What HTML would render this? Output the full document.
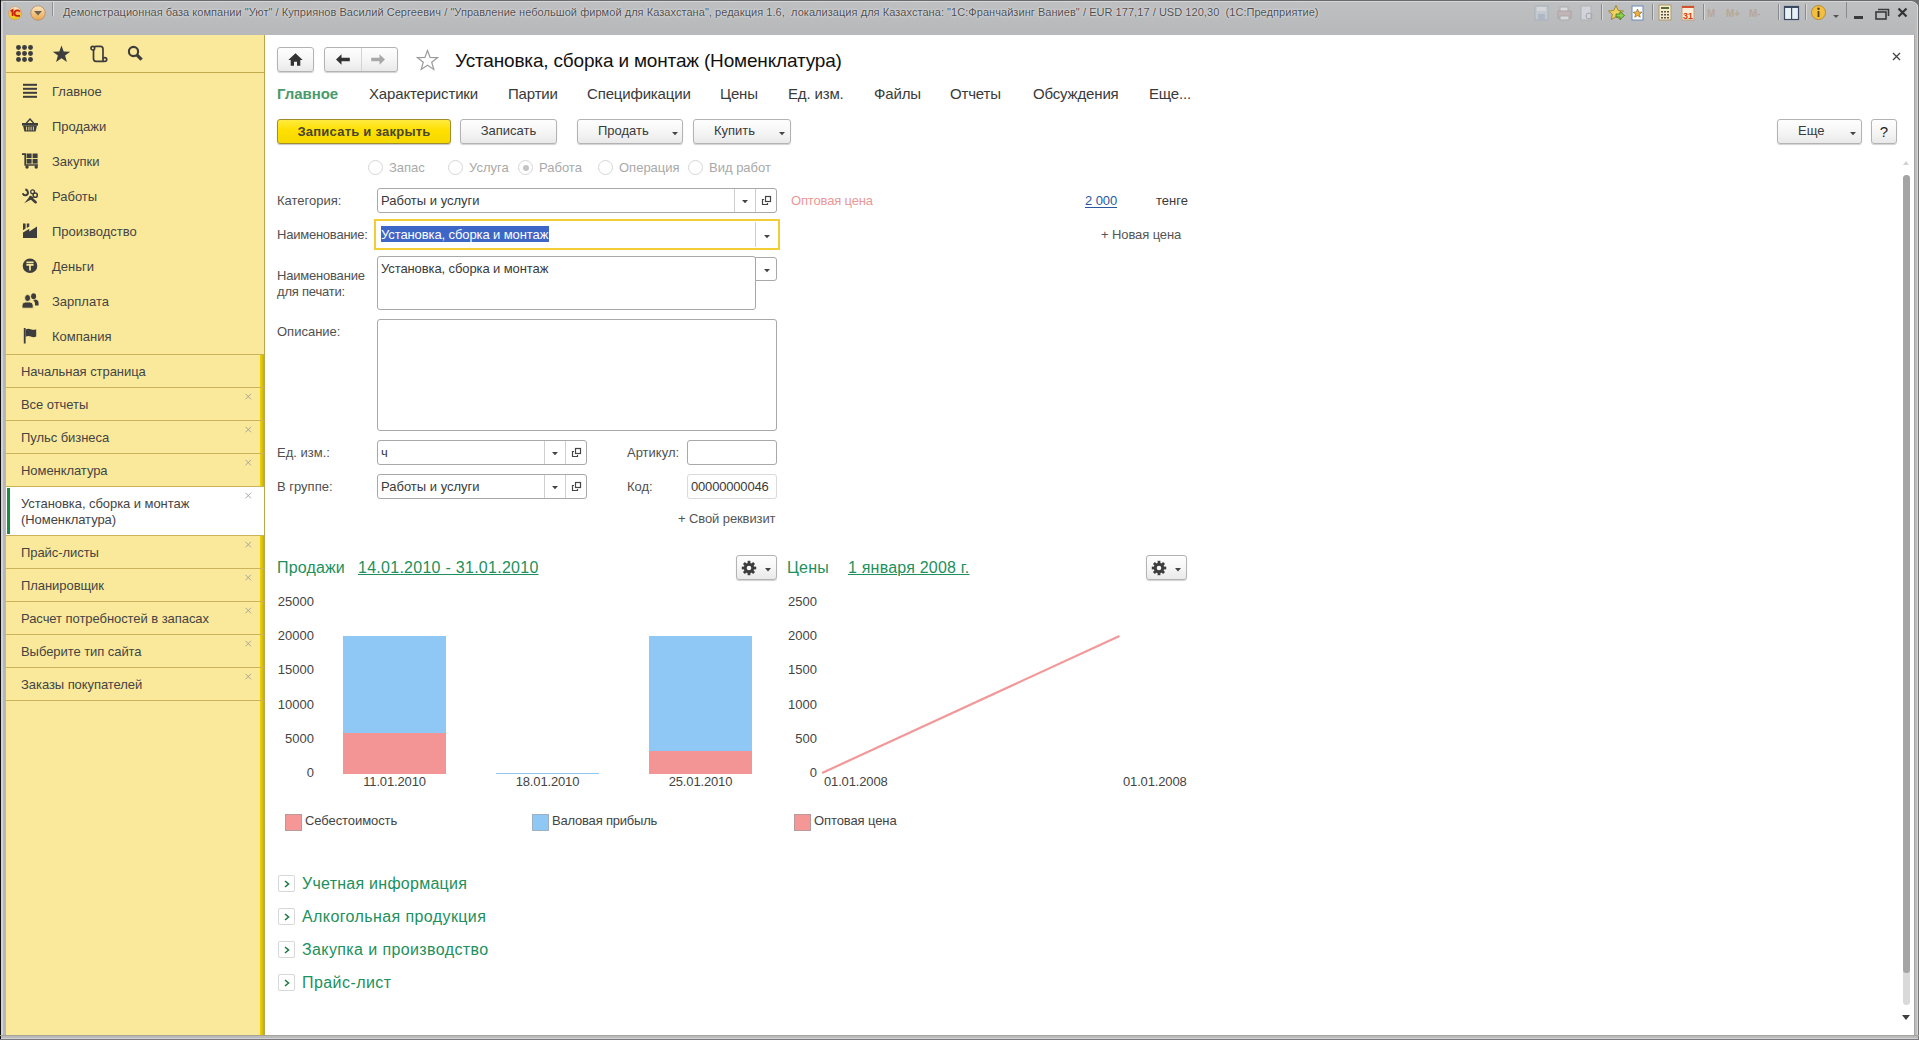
<!DOCTYPE html>
<html><head><meta charset="utf-8">
<style>
*{box-sizing:border-box;margin:0;padding:0}
html,body{width:1919px;height:1040px;overflow:hidden;background:#fff;font-family:"Liberation Sans",sans-serif;color:#333;font-size:13px}
.a{position:absolute;white-space:nowrap}
.sec{left:52px;color:#444}
.win{left:21px;color:#444;letter-spacing:-0.06px}
.sep{left:6px;width:258px;height:1px;background:#cbb35c}
.btn{border:1px solid #b3b3b3;border-radius:3px;background:linear-gradient(#fefefe,#f6f6f6 50%,#e9e9e9);box-shadow:0 1px 1px rgba(0,0,0,.18)}
.fld{border:1px solid #a8a8a8;border-radius:3px;background:#fff}
.lbl{color:#505050}
.txt{color:#3a3a3a}
.green{color:#21905c}
.tab{top:85px;font-size:15px;letter-spacing:-0.16px;color:#3a3a3a}
.yl{width:44px;text-align:right;line-height:16px;color:#444}
.cx{left:243px;width:9px;height:9px}
.dd{width:6px;height:4px}
</style></head><body>
<!-- window frame -->
<div class="a" style="left:0;top:0;width:1919px;height:35px;background:linear-gradient(#bfc0c2,#bbbcbe 50%,#b7b8ba)"></div>
<div class="a" style="left:0;top:0;width:1919px;height:1px;background:#6a6b6d"></div>
<div class="a" style="left:3px;top:1px;width:1906px;height:1px;background:#d5d6d8"></div>
<div class="a" style="left:0;top:0;width:1px;height:1040px;background:#111"></div>
<div class="a" style="left:1px;top:2px;width:2px;height:1038px;background:#d2d3d6"></div>
<div class="a" style="left:3px;top:2px;width:3px;height:1038px;background:#b7b6bd"></div>
<div class="a" style="left:1914px;top:35px;width:1px;height:1005px;background:#a6a6a6"></div>
<div class="a" style="left:1915px;top:2px;width:2px;height:1038px;background:#bdbdbd"></div>
<div class="a" style="left:1917px;top:2px;width:1px;height:1038px;background:#d6d6d6"></div>
<div class="a" style="left:1918px;top:0;width:1px;height:1040px;background:#777"></div>
<div class="a" style="left:0;top:1035px;width:1919px;height:1px;background:#a6a39a"></div>
<div class="a" style="left:1px;top:1036px;width:1917px;height:2px;background:#bababa"></div>
<div class="a" style="left:1px;top:1038px;width:1917px;height:1px;background:#d2d2d6"></div>
<div class="a" style="left:0;top:1039px;width:1919px;height:1px;background:#7a7a7e"></div>

<svg class="a" style="left:1909px;top:0px" width="10" height="10" viewBox="0 0 10 10"><path d="M0 0 H10 V10 Q10 2 2 1.5 H0Z" fill="#6f7072"/><path d="M0 1.5 H2 Q8.6 2 8.6 8.5 V10" fill="none" stroke="#d8d9db" stroke-width="1"/></svg>
<!-- title bar left icons -->
<svg class="a" style="left:7px;top:5px" width="17" height="17" viewBox="0 0 17 17">
<defs><linearGradient id="g1" x1="0" y1="0" x2="0" y2="1"><stop offset="0" stop-color="#fff3d8"/><stop offset=".45" stop-color="#f7b060"/><stop offset=".65" stop-color="#f2d030"/><stop offset="1" stop-color="#e8c020"/></linearGradient>
<linearGradient id="g2" x1="0" y1="0" x2="0" y2="1"><stop offset="0" stop-color="#fbe6c4"/><stop offset=".6" stop-color="#f2c07a"/><stop offset="1" stop-color="#e9a650"/></linearGradient></defs>
<circle cx="8" cy="8.3" r="6.6" fill="url(#g1)" stroke="#c9a37a" stroke-width=".8"/>
<path d="M3.6 6.2 L5.6 5 V11 M7.5 8.5 Q7.5 5.4 10.5 5.4 Q12.2 5.4 12.8 6.6 M7.5 8.5 Q7.5 10.8 10.2 10.8 H13" fill="none" stroke="#c8200a" stroke-width="1.7"/>
</svg>
<svg class="a" style="left:30px;top:5px" width="17" height="17" viewBox="0 0 17 17">
<circle cx="8" cy="8" r="7.2" fill="url(#g2)" stroke="#b58a5a" stroke-width=".8"/>
<path d="M4 6 H12 L8 10.5 Z" fill="#6e6253"/>
</svg>
<div class="a" style="left:52px;top:2px;width:1px;height:14px;background:#8f9093"></div>
<div class="a" style="left:53px;top:2px;width:1px;height:14px;background:#dcdcdc"></div>
<div class="a" style="left:63px;top:6px;font-size:11px;letter-spacing:0.05px;color:#4e4e4e;text-shadow:0 0 3px #e8e8e8,0 0 1px #f0f0f0">Демонстрационная база компании "Уют" / Куприянов Василий Сергеевич / "Управление небольшой фирмой для Казахстана", редакция 1.6,&nbsp; локализация для Казахстана: "1С:Франчайзинг Ваниев" / EUR 177,17 / USD 120,30&nbsp; (1С:Предприятие)</div>

<!-- title bar right icons -->
<svg class="a" style="left:1532px;top:4px" width="310" height="20" viewBox="0 0 310 20">
 <!-- save (disabled) -->
 <g opacity=".45"><rect x="3" y="2" width="13" height="14" fill="#cfd8e4" stroke="#8ea4c0"/><rect x="5" y="3" width="9" height="4" fill="#f0f4f8"/><rect x="6" y="10" width="7" height="6" fill="#9fb3ca"/></g>
 <!-- print -->
 <g opacity=".45"><rect x="28" y="3" width="8" height="5" fill="#fff" stroke="#999"/><rect x="26" y="7" width="13" height="7" fill="#caa" stroke="#988"/><rect x="28" y="12" width="9" height="4" fill="#fff" stroke="#999"/></g>
 <!-- preview -->
 <g opacity=".45"><rect x="49" y="2" width="10" height="14" fill="#eef" stroke="#9aa"/><circle cx="57" cy="12" r="3" fill="none" stroke="#888"/></g>
 <rect x="69" y="0" width="1" height="16" fill="#8a8b8e"/><rect x="70" y="0" width="1" height="16" fill="#d8d8d8"/>
 <!-- add to fav -->
 <path d="M84 1.5 L86.3 6.5 L91.5 7 L87.6 10.4 L88.8 15.5 L84 12.8 L79.2 15.5 L80.4 10.4 L76.5 7 L81.7 6.5Z" fill="#f2d060" stroke="#8c7a20" stroke-width=".8"/>
 <path d="M84 10 H88 V7.5 L92.5 11.5 L88 15.5 V13 H84Z" fill="#8fd050" stroke="#3a7a18" stroke-width=".8"/>
 <!-- doc star -->
 <rect x="100" y="2" width="11" height="14" fill="#fff" stroke="#6a8ab8"/>
 <path d="M105.5 5 L106.8 8 L110 8.2 L107.5 10.2 L108.3 13.3 L105.5 11.6 L102.7 13.3 L103.5 10.2 L101 8.2 L104.2 8Z" fill="#f0b040" stroke="#806020" stroke-width=".6"/>
 <rect x="120" y="0" width="1" height="16" fill="#8a8b8e"/><rect x="121" y="0" width="1" height="16" fill="#d8d8d8"/>
 <!-- calculator -->
 <rect x="127" y="1" width="12" height="15" fill="#f7ecc8" stroke="#b09a70"/>
 <rect x="129" y="3" width="8" height="2" fill="#5a6a40"/>
 <g fill="#555"><rect x="129" y="7" width="2" height="1.5"/><rect x="132" y="7" width="2" height="1.5"/><rect x="135" y="7" width="2" height="1.5"/><rect x="129" y="10" width="2" height="1.5"/><rect x="132" y="10" width="2" height="1.5"/><rect x="135" y="10" width="2" height="1.5"/><rect x="129" y="13" width="2" height="1.5"/><rect x="132" y="13" width="2" height="1.5"/><rect x="135" y="13" width="2" height="1.5"/></g>
 <!-- calendar -->
 <rect x="150" y="2" width="12" height="14" fill="#fbeed8" stroke="#c0a080"/>
 <rect x="150" y="2" width="12" height="2" fill="#d05030"/>
 <text x="151" y="15" font-size="9" font-family="Liberation Sans" font-weight="bold" fill="#d83a10">31</text>
 <rect x="171" y="0" width="1" height="16" fill="#8a8b8e"/><rect x="172" y="0" width="1" height="16" fill="#d8d8d8"/>
 <!-- M M+ M- -->
 <g opacity=".35" font-family="Liberation Sans" font-size="10" font-weight="bold" fill="#b08050"><text x="175" y="13">M</text><text x="194" y="13">M+</text><text x="217" y="13">M-</text></g>
 <rect x="246" y="0" width="1" height="16" fill="#8a8b8e"/><rect x="247" y="0" width="1" height="16" fill="#d8d8d8"/>
 <!-- panels -->
 <rect x="252.5" y="2.5" width="14" height="13" fill="#e8f0f8" stroke="#3a4a60" stroke-width="1.2"/>
 <rect x="252.5" y="2.5" width="14" height="1.5" fill="#3a4a60"/>
 <rect x="259" y="3" width="1.2" height="13" fill="#3a4a60"/>
 <rect x="273" y="0" width="1" height="16" fill="#8a8b8e"/><rect x="274" y="0" width="1" height="16" fill="#d8d8d8"/>
 <!-- info -->
 <circle cx="286.5" cy="8.5" r="7" fill="#f2c040" stroke="#b08020" stroke-width=".8"/>
 <circle cx="286.5" cy="4.8" r="1.2" fill="#5a4010"/><rect x="285.6" y="7" width="1.8" height="6" fill="#5a4010"/>
 <path d="M301 11 H307 L304 14Z" fill="#555"/>
</svg>
<div class="a" style="left:1846px;top:2px;width:1px;height:16px;background:#8a8b8e"></div>
<svg class="a" style="left:1851px;top:6px" width="62" height="18" viewBox="0 0 62 18">
 <rect x="3" y="10" width="9" height="3" fill="#3a3a3a"/>
 <rect x="25" y="6" width="10" height="7" fill="none" stroke="#3a3a3a" stroke-width="1.6"/>
 <path d="M27 3.5 H37.5 V10" fill="none" stroke="#3a3a3a" stroke-width="1.6"/>
 <path d="M47.5 2.5 L55.5 10.5 M55.5 2.5 L47.5 10.5" stroke="#333" stroke-width="2.2"/>
</svg>

<!-- sidebar -->
<div class="a" style="left:6px;top:35px;width:258px;height:1000px;background:#fae99b"></div>
<div class="a" style="left:6px;top:72px;width:258px;height:1px;background:#c2aa4e"></div>
<div class="a" style="left:264px;top:35px;width:1px;height:1000px;background:#b8a64a"></div>
<div class="a" style="left:260px;top:354px;width:4px;height:681px;background:linear-gradient(90deg,#f2d400,#d8be10 60%,#c0a820)"></div>
<!-- sidebar top icons -->
<svg class="a" style="left:16px;top:45px" width="17" height="17" viewBox="0 0 17 17" fill="#3d3d3d">
<circle cx="2.5" cy="2.5" r="2.45"/><circle cx="8.5" cy="2.5" r="2.45"/><circle cx="14.5" cy="2.5" r="2.45"/>
<circle cx="2.5" cy="8.5" r="2.45"/><circle cx="8.5" cy="8.5" r="2.45"/><circle cx="14.5" cy="8.5" r="2.45"/>
<circle cx="2.5" cy="14.5" r="2.45"/><circle cx="8.5" cy="14.5" r="2.45"/><circle cx="14.5" cy="14.5" r="2.45"/></svg>
<svg class="a" style="left:52px;top:45px" width="19" height="18" viewBox="0 0 19 18"><path fill="#3d3d3d" d="M9.5 0.5 L11.7 6.6 L18.2 6.7 L13.1 10.6 L14.9 16.9 L9.5 13.2 L4.1 16.9 L5.9 10.6 L0.8 6.7 L7.3 6.6 Z"/></svg>
<svg class="a" style="left:90px;top:45px" width="18" height="18" viewBox="0 0 18 18" fill="none" stroke="#3d3d3d" stroke-width="1.7"><path d="M3.5 4 V13.5 Q3.5 16.3 6 16.3 H14"/><path d="M3.5 4 Q3.5 1.3 6 1.3 H10.5 Q13 1.3 13 4 V13.5"/><circle cx="2.8" cy="3.2" r="1.8" fill="#fae99b"/><circle cx="14.8" cy="14.6" r="1.9" fill="#fae99b"/></svg>
<svg class="a" style="left:127px;top:45px" width="17" height="17" viewBox="0 0 17 17" fill="none" stroke="#3d3d3d"><circle cx="6.5" cy="6.5" r="4.6" stroke-width="2.1"/><path d="M9.8 9.8 L14.6 14.6" stroke-width="3.2" stroke-linecap="butt"/></svg>

<!-- section icons -->
<svg class="a" style="left:23px;top:83px" width="14" height="16" viewBox="0 0 14 16" fill="#3d3d3d"><rect x="0" y="0.8" width="14" height="2"/><rect x="0" y="4.8" width="14" height="2"/><rect x="0" y="8.8" width="14" height="2"/><rect x="0" y="12.8" width="14" height="2"/></svg>
<svg class="a" style="left:22px;top:118px" width="16" height="14" viewBox="0 0 16 14" fill="#3d3d3d"><path d="M4.2 5.2 L8 1 L11.8 5.2" fill="none" stroke="#3d3d3d" stroke-width="1.4"/><rect x="0" y="5" width="16" height="2.6"/><path d="M1 7.5 H15 L13.6 13.6 H2.4 Z"/><path d="M4.6 8.6 V12.4 M6.9 8.6 V12.4 M9.1 8.6 V12.4 M11.4 8.6 V12.4" stroke="#fae99b" stroke-width=".9"/></svg>
<svg class="a" style="left:22px;top:153px" width="17" height="16" viewBox="0 0 17 16" fill="#3d3d3d"><path d="M0 1.2 H3.2 V12 H16" fill="none" stroke="#3d3d3d" stroke-width="1.7"/><rect x="4.6" y="0.5" width="5" height="4.6"/><rect x="10.6" y="0.5" width="5" height="4.6"/><rect x="4.6" y="6" width="5" height="4.6"/><rect x="10.6" y="6" width="5" height="4.6"/><circle cx="5" cy="14" r="1.7"/><circle cx="14.2" cy="14" r="1.7"/></svg>
<svg class="a" style="left:22px;top:188px" width="17" height="16" viewBox="0 0 17 16" fill="#3d3d3d">
<path d="M3.4 1.2 C6.6 2.4 6.8 6.6 3.8 7.2 C2.2 7.5 1.2 6.6 0.8 5.2" fill="none" stroke="#3d3d3d" stroke-width="2"/>
<path d="M8.2 9.4 L13.6 14.2" stroke="#3d3d3d" stroke-width="2.6" stroke-linecap="round"/>
<path d="M8.6 7.6 L11.8 10 L2.2 15.2 Z"/>
<circle cx="10.6" cy="3.8" r="1.9" fill="none" stroke="#3d3d3d" stroke-width="1.3"/>
<circle cx="13.2" cy="7.2" r="2.1" fill="none" stroke="#3d3d3d" stroke-width="1.5"/></svg>
<svg class="a" style="left:23px;top:223px" width="15" height="16" viewBox="0 0 15 16" fill="#3d3d3d"><path d="M0 0.5 H2.6 V5.6 L0 7.2Z M3.8 0.5 H6.3 V3.4 L3.8 4.9Z"/><path d="M0 9.6 L6.3 5.8 V8.6 L14 3.4 V15 H0 Z"/></svg>
<svg class="a" style="left:22px;top:258px" width="16" height="16" viewBox="0 0 16 16"><circle cx="8" cy="7.8" r="7.3" fill="#3d3d3d"/><path d="M4.4 4.4 H11.6 M4.4 6.8 H11.6 M8 6.8 V12.4" stroke="#fae99b" stroke-width="1.7"/></svg>
<svg class="a" style="left:22px;top:293px" width="17" height="16" viewBox="0 0 17 16" fill="#3d3d3d"><ellipse cx="11.6" cy="3.2" rx="2.5" ry="3"/><path d="M13 6.6 Q16.6 7 16.6 10 V12.6 H13 V10.4 Q13 8.4 11.2 7.4Z"/><ellipse cx="5.6" cy="5" rx="3" ry="3.5" stroke="#fae99b" stroke-width=".9"/><path d="M0 15.2 V12.4 Q0 9 3.6 9 H7.6 Q11.2 9 11.2 12.4 V15.2Z" stroke="#fae99b" stroke-width=".9"/></svg>
<svg class="a" style="left:23px;top:328px" width="14" height="16" viewBox="0 0 14 16" fill="#3d3d3d"><rect x="0.8" y="0" width="1.8" height="15.5"/><path d="M2.6 1.4 Q5.2 0 7.8 1.2 Q10.6 2.4 13.2 1.2 V8.6 Q10.6 9.8 7.8 8.6 Q5.2 7.4 2.6 8.8Z"/></svg>

<!-- sections -->
<div class="a sec" style="top:84px">Главное</div>
<div class="a sec" style="top:119px">Продажи</div>
<div class="a sec" style="top:154px">Закупки</div>
<div class="a sec" style="top:189px">Работы</div>
<div class="a sec" style="top:224px">Производство</div>
<div class="a sec" style="top:259px">Деньги</div>
<div class="a sec" style="top:294px">Зарплата</div>
<div class="a sec" style="top:329px">Компания</div>

<!-- open windows -->
<div class="a sep" style="top:354px"></div>
<div class="a win" style="top:364px">Начальная страница</div>
<div class="a sep" style="top:387px"></div>
<div class="a win" style="top:397px">Все отчеты</div>
<div class="a sep" style="top:420px"></div>
<div class="a win" style="top:430px">Пульс бизнеса</div>
<div class="a sep" style="top:453px"></div>
<div class="a win" style="top:463px">Номенклатура</div>
<div class="a sep" style="top:486px"></div>
<div class="a" style="left:6px;top:487px;width:258px;height:48px;background:#fff"></div>
<div class="a" style="left:7px;top:488px;width:3px;height:46px;background:#1c8b48"></div>
<div class="a win" style="top:496px;line-height:16px">Установка, сборка и монтаж<br>(Номенклатура)</div>
<div class="a sep" style="top:535px"></div>
<div class="a win" style="top:545px">Прайс-листы</div>
<div class="a sep" style="top:568px"></div>
<div class="a win" style="top:578px">Планировщик</div>
<div class="a sep" style="top:601px"></div>
<div class="a win" style="top:611px">Расчет потребностей в запасах</div>
<div class="a sep" style="top:634px"></div>
<div class="a win" style="top:644px">Выберите тип сайта</div>
<div class="a sep" style="top:667px"></div>
<div class="a win" style="top:677px">Заказы покупателей</div>
<div class="a sep" style="top:700px"></div>
<svg class="a cx" style="top:392px" viewBox="0 0 9 9"><path d="M2.5 1.8 L8 7.3 M8 1.8 L2.5 7.3" stroke="#9a9a9a" stroke-width=".85"/></svg>
<svg class="a cx" style="top:425px" viewBox="0 0 9 9"><path d="M2.5 1.8 L8 7.3 M8 1.8 L2.5 7.3" stroke="#9a9a9a" stroke-width=".85"/></svg>
<svg class="a cx" style="top:458px" viewBox="0 0 9 9"><path d="M2.5 1.8 L8 7.3 M8 1.8 L2.5 7.3" stroke="#9a9a9a" stroke-width=".85"/></svg>
<svg class="a cx" style="top:491px" viewBox="0 0 9 9"><path d="M2.5 1.8 L8 7.3 M8 1.8 L2.5 7.3" stroke="#9a9a9a" stroke-width=".85"/></svg>
<svg class="a cx" style="top:540px" viewBox="0 0 9 9"><path d="M2.5 1.8 L8 7.3 M8 1.8 L2.5 7.3" stroke="#9a9a9a" stroke-width=".85"/></svg>
<svg class="a cx" style="top:573px" viewBox="0 0 9 9"><path d="M2.5 1.8 L8 7.3 M8 1.8 L2.5 7.3" stroke="#9a9a9a" stroke-width=".85"/></svg>
<svg class="a cx" style="top:606px" viewBox="0 0 9 9"><path d="M2.5 1.8 L8 7.3 M8 1.8 L2.5 7.3" stroke="#9a9a9a" stroke-width=".85"/></svg>
<svg class="a cx" style="top:639px" viewBox="0 0 9 9"><path d="M2.5 1.8 L8 7.3 M8 1.8 L2.5 7.3" stroke="#9a9a9a" stroke-width=".85"/></svg>
<svg class="a cx" style="top:672px" viewBox="0 0 9 9"><path d="M2.5 1.8 L8 7.3 M8 1.8 L2.5 7.3" stroke="#9a9a9a" stroke-width=".85"/></svg>
<!-- header -->
<div class="a btn" style="left:277px;top:47px;width:37px;height:25px"></div>
<svg class="a" style="left:288px;top:53px" width="15" height="13" viewBox="0 0 15 13" fill="#333"><path d="M7.5 0.3 L14.7 7 H12.3 V12.7 H9 V8.8 H6 V12.7 H2.7 V7 H0.3 Z"/></svg>
<div class="a btn" style="left:324px;top:47px;width:74px;height:25px"></div>
<div class="a" style="left:361px;top:48px;width:1px;height:23px;background:#d4d4d4"></div>
<svg class="a" style="left:336px;top:54px" width="14" height="11" viewBox="0 0 14 11" fill="#333"><path d="M0 5.5 L5.5 0.3 V3.8 H13.8 V7.2 H5.5 V10.7 Z"/></svg>
<svg class="a" style="left:371px;top:54px" width="14" height="11" viewBox="0 0 14 11" fill="#a8a8a8"><path d="M14 5.5 L8.5 0.3 V3.8 H0.2 V7.2 H8.5 V10.7 Z"/></svg>
<svg class="a" style="left:416px;top:49px" width="23" height="22" viewBox="0 0 23 22"><path fill="none" stroke="#9a9a9a" stroke-width="1.2" d="M11.5 1.5 L14.1 8.4 L21.5 8.6 L15.7 13.2 L17.8 20.4 L11.5 16.3 L5.2 20.4 L7.3 13.2 L1.5 8.6 L8.9 8.4 Z"/></svg>
<div class="a" style="left:455px;top:50px;font-size:19px;letter-spacing:-0.17px;color:#111">Установка, сборка и монтаж (Номенклатура)</div>
<svg class="a" style="left:1891px;top:51px" width="11" height="11" viewBox="0 0 11 11"><path d="M2 2 L9 9 M9 2 L2 9" stroke="#444" stroke-width="1.3"/></svg>

<!-- tabs -->
<div class="a tab" style="left:277px;font-weight:bold;color:#4a9a6c;font-size:15px;letter-spacing:-0.05px">Главное</div>
<div class="a tab" style="left:369px">Характеристики</div>
<div class="a tab" style="left:508px">Партии</div>
<div class="a tab" style="left:587px">Спецификации</div>
<div class="a tab" style="left:720px">Цены</div>
<div class="a tab" style="left:788px">Ед. изм.</div>
<div class="a tab" style="left:874px">Файлы</div>
<div class="a tab" style="left:950px">Отчеты</div>
<div class="a tab" style="left:1033px">Обсуждения</div>
<div class="a tab" style="left:1149px">Еще...</div>

<!-- buttons row -->
<div class="a" style="left:277px;top:119px;width:174px;height:25px;border:1px solid #a08c28;border-radius:3px;background:linear-gradient(#ffea40,#ffe000 45%,#f4d800);box-shadow:0 1px 1px rgba(0,0,0,.22)"></div>
<div class="a" style="left:277px;top:123.5px;width:174px;text-align:center;font-weight:bold;letter-spacing:0.24px;color:#4a4630">Записать и закрыть</div>
<div class="a btn" style="left:460px;top:119px;width:97px;height:25px"></div>
<div class="a txt" style="left:460px;top:123px;width:97px;text-align:center">Записать</div>
<div class="a btn" style="left:577px;top:119px;width:106px;height:25px"></div>
<div class="a txt" style="left:598px;top:123px">Продать</div>
<svg class="a dd" style="left:671.5px;top:132px"><path d="M0 0 H6 L3 3.2Z" fill="#444"/></svg>
<div class="a btn" style="left:693px;top:119px;width:98px;height:25px"></div>
<div class="a txt" style="left:714px;top:123px">Купить</div>
<svg class="a dd" style="left:778.5px;top:132px"><path d="M0 0 H6 L3 3.2Z" fill="#444"/></svg>
<div class="a btn" style="left:1777px;top:119px;width:85px;height:25px"></div>
<div class="a txt" style="left:1798px;top:123px">Еще</div>
<svg class="a dd" style="left:1849.5px;top:132px"><path d="M0 0 H6 L3 3.2Z" fill="#444"/></svg>
<div class="a btn" style="left:1871px;top:119px;width:26px;height:25px"></div>
<div class="a" style="left:1871px;top:123px;width:26px;text-align:center;font-size:15px;color:#222">?</div>

<!-- radios -->
<div class="a" style="left:368px;top:160px;width:15px;height:15px;border:1.5px solid #d6d6d6;border-radius:50%"></div>
<div class="a" style="left:448px;top:160px;width:15px;height:15px;border:1.5px solid #d6d6d6;border-radius:50%"></div>
<div class="a" style="left:518px;top:160px;width:15px;height:15px;border:1.5px solid #d6d6d6;border-radius:50%"></div>
<div class="a" style="left:522.5px;top:164.5px;width:6px;height:6px;background:#c4c4c4;border-radius:50%"></div>
<div class="a" style="left:598px;top:160px;width:15px;height:15px;border:1.5px solid #d6d6d6;border-radius:50%"></div>
<div class="a" style="left:688px;top:160px;width:15px;height:15px;border:1.5px solid #d6d6d6;border-radius:50%"></div>
<div class="a" style="left:389px;top:160px;color:#a9a9a9">Запас</div>
<div class="a" style="left:469px;top:160px;color:#a9a9a9">Услуга</div>
<div class="a" style="left:539px;top:160px;color:#a9a9a9">Работа</div>
<div class="a" style="left:619px;top:160px;color:#a9a9a9">Операция</div>
<div class="a" style="left:709px;top:160px;color:#a9a9a9">Вид работ</div>

<!-- form -->
<div class="a lbl" style="left:277px;top:193px">Категория:</div>
<div class="a fld" style="left:377px;top:188px;width:400px;height:25px"></div>
<div class="a" style="left:734px;top:189px;width:1px;height:23px;background:#cfcfcf"></div>
<div class="a" style="left:755px;top:189px;width:1px;height:23px;background:#cfcfcf"></div>
<svg class="a dd" style="left:741.5px;top:200px"><path d="M0 0 H6 L3 3.2Z" fill="#444"/></svg>
<svg class="a" style="left:761px;top:195px" width="11" height="11" viewBox="0 0 11 11" fill="none" stroke="#444" stroke-width="1.2"><rect x="4.5" y="1.5" width="5" height="5"/><path d="M3 4.5 H1.5 V9.5 H6.5 V8"/></svg>
<div class="a txt" style="left:381px;top:193px">Работы и услуги</div>
<div class="a" style="left:791px;top:193px;color:#e99897;letter-spacing:-0.16px">Оптовая цена</div>
<div class="a" style="left:1085px;top:193px;color:#2a58a0;text-decoration:underline;text-underline-offset:2px;letter-spacing:-0.1px">2 000</div>
<div class="a txt" style="left:1156px;top:193px">тенге</div>
<div class="a" style="left:1101px;top:227px;color:#555;letter-spacing:-0.1px">+ Новая цена</div>

<div class="a lbl" style="left:277px;top:227px;letter-spacing:-0.23px">Наименование:</div>
<div class="a" style="left:374px;top:219px;width:406px;height:31px;border:2px solid #f2cd36;background:#fff"></div>
<div class="a" style="left:755px;top:222px;width:1px;height:25px;background:#cfcfcf"></div>
<svg class="a dd" style="left:763.5px;top:235px"><path d="M0 0 H6 L3 3.2Z" fill="#444"/></svg>
<div class="a" style="left:381px;top:226px;width:168px;height:16px;background:#3e66c6"></div>
<div class="a" style="left:381px;top:227px;color:#fff;letter-spacing:-0.1px">Установка, сборка и монтаж</div>

<div class="a lbl" style="left:277px;top:268px;line-height:16px;letter-spacing:-0.2px">Наименование<br>для печати:</div>
<div class="a fld" style="left:377px;top:256px;width:379px;height:54px"></div>
<div class="a fld" style="left:755px;top:257px;width:22px;height:24px;border-radius:0 3px 3px 0"></div>
<svg class="a dd" style="left:763.5px;top:269px"><path d="M0 0 H6 L3 3.2Z" fill="#444"/></svg>
<div class="a txt" style="left:381px;top:261px;letter-spacing:-0.1px">Установка, сборка и монтаж</div>

<div class="a lbl" style="left:277px;top:324px">Описание:</div>
<div class="a fld" style="left:377px;top:319px;width:400px;height:112px"></div>

<div class="a lbl" style="left:277px;top:445px">Ед. изм.:</div>
<div class="a fld" style="left:377px;top:440px;width:210px;height:25px"></div>
<div class="a" style="left:544px;top:441px;width:1px;height:23px;background:#cfcfcf"></div>
<div class="a" style="left:565px;top:441px;width:1px;height:23px;background:#cfcfcf"></div>
<svg class="a dd" style="left:551.5px;top:452px"><path d="M0 0 H6 L3 3.2Z" fill="#444"/></svg>
<svg class="a" style="left:571px;top:447px" width="11" height="11" viewBox="0 0 11 11" fill="none" stroke="#444" stroke-width="1.2"><rect x="4.5" y="1.5" width="5" height="5"/><path d="M3 4.5 H1.5 V9.5 H6.5 V8"/></svg>
<div class="a txt" style="left:381px;top:445px">ч</div>
<div class="a lbl" style="left:627px;top:445px">Артикул:</div>
<div class="a fld" style="left:687px;top:440px;width:90px;height:25px"></div>

<div class="a lbl" style="left:277px;top:479px">В группе:</div>
<div class="a fld" style="left:377px;top:474px;width:210px;height:25px"></div>
<div class="a" style="left:544px;top:475px;width:1px;height:23px;background:#cfcfcf"></div>
<div class="a" style="left:565px;top:475px;width:1px;height:23px;background:#cfcfcf"></div>
<svg class="a dd" style="left:551.5px;top:486px"><path d="M0 0 H6 L3 3.2Z" fill="#444"/></svg>
<svg class="a" style="left:571px;top:481px" width="11" height="11" viewBox="0 0 11 11" fill="none" stroke="#444" stroke-width="1.2"><rect x="4.5" y="1.5" width="5" height="5"/><path d="M3 4.5 H1.5 V9.5 H6.5 V8"/></svg>
<div class="a txt" style="left:381px;top:479px">Работы и услуги</div>
<div class="a lbl" style="left:627px;top:479px">Код:</div>
<div class="a fld" style="left:687px;top:474px;width:90px;height:25px;border-color:#dadada"></div>
<div class="a txt" style="left:691px;top:479px;letter-spacing:-0.18px">00000000046</div>
<div class="a" style="left:678px;top:511px;color:#555;letter-spacing:-0.1px">+ Свой реквизит</div>
<!-- chart headers -->
<div class="a green" style="left:277px;top:559px;font-size:16px;letter-spacing:0.15px">Продажи</div>
<div class="a green" style="left:358px;top:559px;font-size:16px;letter-spacing:0.27px;text-decoration:underline">14.01.2010 - 31.01.2010</div>
<div class="a btn" style="left:736px;top:555px;width:41px;height:25px"></div>
<svg class="a" style="left:741px;top:560px" width="16" height="16" viewBox="0 0 16 16"><g fill="#3d3d3d"><circle cx="8" cy="8" r="5.2"/><g id="teeth"><rect x="6.6" y="0.8" width="2.8" height="14.4"/><rect x="6.6" y="0.8" width="2.8" height="14.4" transform="rotate(45 8 8)"/><rect x="6.6" y="0.8" width="2.8" height="14.4" transform="rotate(90 8 8)"/><rect x="6.6" y="0.8" width="2.8" height="14.4" transform="rotate(135 8 8)"/></g></g><circle cx="8" cy="8" r="2.3" fill="#f6f6f6"/></svg>
<svg class="a" style="left:765px;top:568px" width="6" height="4"><path d="M0 0 H6 L3 3.5Z" fill="#444"/></svg>
<div class="a green" style="left:787px;top:559px;font-size:16px;letter-spacing:0.2px">Цены</div>
<div class="a green" style="left:848px;top:559px;font-size:16px;letter-spacing:0.2px;text-decoration:underline">1 января 2008 г.</div>
<div class="a btn" style="left:1146px;top:555px;width:41px;height:25px"></div>
<svg class="a" style="left:1151px;top:560px" width="16" height="16" viewBox="0 0 16 16"><g fill="#3d3d3d"><circle cx="8" cy="8" r="5.2"/><rect x="6.6" y="0.8" width="2.8" height="14.4"/><rect x="6.6" y="0.8" width="2.8" height="14.4" transform="rotate(45 8 8)"/><rect x="6.6" y="0.8" width="2.8" height="14.4" transform="rotate(90 8 8)"/><rect x="6.6" y="0.8" width="2.8" height="14.4" transform="rotate(135 8 8)"/></g><circle cx="8" cy="8" r="2.3" fill="#f6f6f6"/></svg>
<svg class="a" style="left:1175px;top:568px" width="6" height="4"><path d="M0 0 H6 L3 3.5Z" fill="#444"/></svg>

<!-- bar chart -->
<div class="a yl" style="left:270px;top:594px">25000</div>
<div class="a yl" style="left:270px;top:628px">20000</div>
<div class="a yl" style="left:270px;top:662px">15000</div>
<div class="a yl" style="left:270px;top:697px">10000</div>
<div class="a yl" style="left:270px;top:731px">5000</div>
<div class="a yl" style="left:270px;top:765px">0</div>
<div class="a" style="left:343px;top:636px;width:103px;height:97px;background:#8fc7f5"></div>
<div class="a" style="left:343px;top:733px;width:103px;height:41px;background:#f39595"></div>
<div class="a" style="left:496px;top:773px;width:103px;height:1px;background:#8fc7f5"></div>
<div class="a" style="left:649px;top:636px;width:103px;height:115px;background:#8fc7f5"></div>
<div class="a" style="left:649px;top:751px;width:103px;height:23px;background:#f39595"></div>
<div class="a" style="left:343px;top:774px;width:103px;text-align:center;line-height:16px;color:#444;letter-spacing:-0.15px">11.01.2010</div>
<div class="a" style="left:496px;top:774px;width:103px;text-align:center;line-height:16px;color:#444;letter-spacing:-0.15px">18.01.2010</div>
<div class="a" style="left:649px;top:774px;width:103px;text-align:center;line-height:16px;color:#444;letter-spacing:-0.15px">25.01.2010</div>
<div class="a" style="left:285px;top:814px;width:17px;height:17px;background:#f69797;border:1px solid #b89a9a"></div>
<div class="a" style="left:305px;top:813px;line-height:16px;color:#444;letter-spacing:-0.08px">Себестоимость</div>
<div class="a" style="left:532px;top:814px;width:17px;height:17px;background:#8fc7f5;border:1px solid #9fb0c0"></div>
<div class="a" style="left:552px;top:813px;line-height:16px;color:#444;letter-spacing:-0.2px">Валовая прибыль</div>

<!-- line chart -->
<div class="a yl" style="left:773px;top:594px">2500</div>
<div class="a yl" style="left:773px;top:628px">2000</div>
<div class="a yl" style="left:773px;top:662px">1500</div>
<div class="a yl" style="left:773px;top:697px">1000</div>
<div class="a yl" style="left:773px;top:731px">500</div>
<div class="a yl" style="left:773px;top:765px">0</div>
<svg class="a" style="left:815px;top:625px" width="320" height="155"><path d="M7 148 L304.5 11" stroke="#f29898" stroke-width="2.2" fill="none"/></svg>
<div class="a" style="left:824px;top:774px;line-height:16px;color:#444;letter-spacing:-0.15px">01.01.2008</div>
<div class="a" style="left:1123px;top:774px;line-height:16px;color:#444;letter-spacing:-0.15px">01.01.2008</div>
<div class="a" style="left:794px;top:814px;width:17px;height:17px;background:#f69797;border:1px solid #b89a9a"></div>
<div class="a" style="left:814px;top:813px;line-height:16px;color:#444;letter-spacing:-0.1px">Оптовая цена</div>

<!-- groups -->
<div class="a" style="left:278px;top:875px;width:17px;height:17px;border:1px solid #d8d8d8;border-radius:2px;background:#fff"></div>
<svg class="a" style="left:284px;top:880px" width="6" height="8"><path d="M1 1 L4.5 4 L1 7" stroke="#1e7a45" stroke-width="1.6" fill="none"/></svg>
<div class="a" style="left:278px;top:908px;width:17px;height:17px;border:1px solid #d8d8d8;border-radius:2px;background:#fff"></div>
<svg class="a" style="left:284px;top:913px" width="6" height="8"><path d="M1 1 L4.5 4 L1 7" stroke="#1e7a45" stroke-width="1.6" fill="none"/></svg>
<div class="a" style="left:278px;top:941px;width:17px;height:17px;border:1px solid #d8d8d8;border-radius:2px;background:#fff"></div>
<svg class="a" style="left:284px;top:946px" width="6" height="8"><path d="M1 1 L4.5 4 L1 7" stroke="#1e7a45" stroke-width="1.6" fill="none"/></svg>
<div class="a" style="left:278px;top:974px;width:17px;height:17px;border:1px solid #d8d8d8;border-radius:2px;background:#fff"></div>
<svg class="a" style="left:284px;top:979px" width="6" height="8"><path d="M1 1 L4.5 4 L1 7" stroke="#1e7a45" stroke-width="1.6" fill="none"/></svg>
<div class="a green" style="left:302px;top:875px;font-size:16px;letter-spacing:0.26px">Учетная информация</div>
<div class="a green" style="left:302px;top:908px;font-size:16px;letter-spacing:0.4px">Алкогольная продукция</div>
<div class="a green" style="left:302px;top:941px;font-size:16px;letter-spacing:0.39px">Закупка и производство</div>
<div class="a green" style="left:302px;top:974px;font-size:16px;letter-spacing:0.44px">Прайс-лист</div>

<!-- scrollbar -->
<svg class="a" style="left:1903px;top:161px" width="6" height="4"><path d="M0 4 H6 L3 0Z" fill="#d2d2d2"/></svg>
<div class="a" style="left:1903px;top:175px;width:7px;height:830px;border-radius:3.5px;background:#d9d9d9"></div>
<div class="a" style="left:1903px;top:175px;width:7px;height:798px;border-radius:3.5px;background:#a4a4a4"></div>
<svg class="a" style="left:1902px;top:1015px" width="8" height="5"><path d="M0 0 H8 L4 5Z" fill="#404040"/></svg>
</body></html>
